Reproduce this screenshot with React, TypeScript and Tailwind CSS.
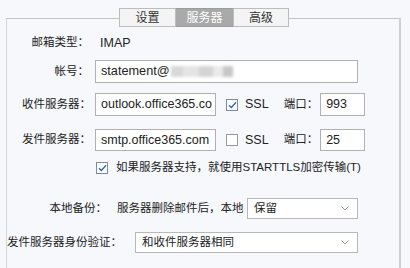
const FONT = { fontFamily: '"Liberation Sans", "Noto Sans CJK SC", sans-serif' }

function Check({ checked }: { checked: boolean }) {
  return (
    <span className={`w-[12px] h-[12px] border bg-white flex items-center justify-center shrink-0 ${checked ? 'border-[#7a8aa6]' : 'border-[#9a9a9a]'}`}>
      {checked && (
        <svg width="9" height="8" viewBox="0 0 9 8">
          <path d="M1 4.2 L3.4 6.5 L8 1.2" fill="none" stroke="#2b65b8" strokeWidth="1.3" />
        </svg>
      )}
    </span>
  )
}

function Chevron() {
  return (
    <svg width="8" height="5" viewBox="0 0 8 5" className="ml-auto mr-[8px]">
      <path d="M0.5 0.5 L4 4 L7.5 0.5" fill="none" stroke="#9a9a9a" strokeWidth="1" />
    </svg>
  )
}

export default function App() {
  return (
    <div className="w-[410px] h-[268px] bg-[#f7f8fc] overflow-hidden text-[11.5px] text-[#222]" style={FONT}>
      {/* 탭 */}
      <div className="flex pl-[119px] pt-[8px] relative z-10 text-[12px]">
        <div className="w-[57px] h-[19px] border border-[#bcbcbc] bg-[#f4f4f4] flex items-center justify-center text-[#333]">设置</div>
        <div className="w-[57px] h-[19px] border-y border-[#9c9c9c] bg-[#a9a9a9] flex items-center justify-center text-white">服务器</div>
        <div className="w-[56px] h-[19px] border border-[#bcbcbc] bg-[#f4f4f4] flex items-center justify-center text-[#333]">高级</div>
      </div>

      {/* 그룹 박스 */}
      <div className="ml-[6px] w-[395px] h-[260px] -mt-[9px] border-t border-l border-r-2 border-t-[#c4c4c4] border-l-[#d6d6d6] border-r-[#cfd0d3]">
        <div className="pt-[16px] flex items-center h-[32px]">
          <span className="w-[88px] text-right pr-[6px]">邮箱类型：</span>
          <span className="text-[12.5px] ml-[5px]">IMAP</span>
        </div>

        <div className="mt-[9px] flex items-center">
          <span className="w-[88px] text-right pr-[6px]">帐号：</span>
          <div className="w-[263px] h-[23px] border border-[#b0b0b0] bg-white flex items-center pl-[5px] text-[12.7px]">
            <span>statement@</span>
            <span className="flex items-center blur-[1.5px] ml-[1px]">
              <span className="w-[12px] h-[11px] bg-[#d8d8d8]" />
              <span className="w-[16px] h-[11px] bg-[#e4e4e4]" />
              <span className="w-[14px] h-[11px] bg-[#d4d4d4]" />
              <span className="w-[10px] h-[11px] bg-[#eaeaea]" />
              <span className="w-[10px] h-[11px] bg-[#c6c6c6]" />
            </span>
          </div>
        </div>

        <div className="mt-[10px] flex items-center">
          <span className="w-[88px] text-right pr-[4px]">收件服务器：</span>
          <div className="w-[121px] h-[23px] border border-[#b0b0b0] bg-white flex items-center pl-[5px] text-[12.5px] whitespace-nowrap">outlook.office365.co</div>
          <span className="ml-[10px]"><Check checked /></span>
          <span className="ml-[7px] text-[12.5px]">SSL</span>
          <span className="ml-[15px]">端口：</span>
          <div className="ml-[2px] w-[45px] h-[23px] border border-[#b0b0b0] bg-white flex items-center pl-[5px] text-[12.5px]">993</div>
        </div>

        <div className="mt-[13px] flex items-center">
          <span className="w-[88px] text-right pr-[4px]">发件服务器：</span>
          <div className="w-[121px] h-[22px] border border-[#b0b0b0] bg-white flex items-center pl-[5px] text-[12.5px] whitespace-nowrap">smtp.office365.com</div>
          <span className="ml-[10px]"><Check checked={false} /></span>
          <span className="ml-[7px] text-[12.5px]">SSL</span>
          <span className="ml-[15px]">端口：</span>
          <div className="ml-[2px] w-[45px] h-[22px] border border-[#b0b0b0] bg-white flex items-center pl-[5px] text-[12.5px]">25</div>
        </div>

        <div className="mt-[9px] flex items-center h-[16px] pl-[89px]">
          <Check checked />
          <span className="ml-[8px]">如果服务器支持，就使用STARTTLS加密传输(T)</span>
        </div>

        <div className="mt-[22px] flex items-center">
          <span className="w-[110px] text-right pr-[10px]">本地备份：</span>
          <span className="w-[130px]">服务器删除邮件后，本地</span>
          <div className="w-[111px] h-[21px] border border-[#b8b8b8] bg-white flex items-center pl-[6px]">
            <span>保留</span>
            <Chevron />
          </div>
        </div>

        <div className="mt-[13px] flex items-center">
          <span className="w-[128px]">发件服务器身份验证：</span>
          <div className="w-[223px] h-[21px] border border-[#b8b8b8] bg-white flex items-center pl-[6px]">
            <span>和收件服务器相同</span>
            <Chevron />
          </div>
        </div>
      </div>
    </div>
  )
}
